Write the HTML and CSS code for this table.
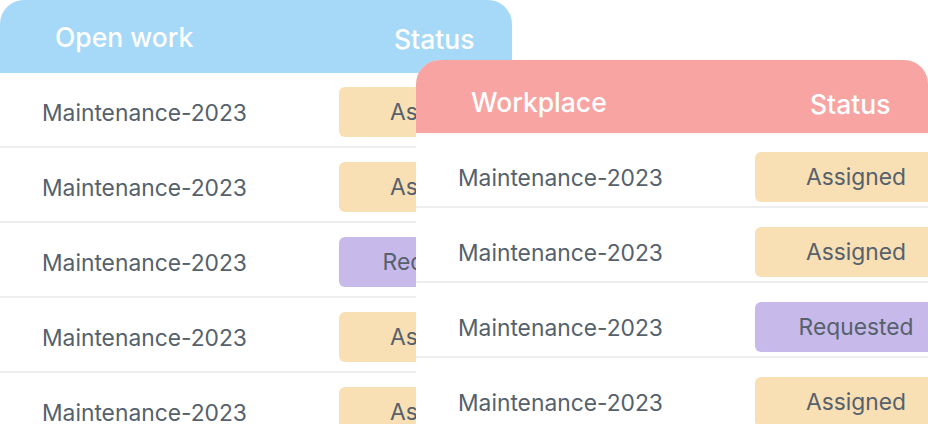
FILE: index.html
```html
<!DOCTYPE html>
<html lang="en">
  <head>
    <meta charset="UTF-8" />
    <meta name="viewport" content="width=device-width, initial-scale=1.0" />
    <title>Work boards</title>
    <link rel="stylesheet" href="styles.css">
  </head>

  <body>
    <div class="stage">
      <section class="board board--open">
        <header class="board-head">
          <span class="board-title">Open work</span>
          <span class="board-status">Status</span>
        </header>
        <div class="row">
          <span class="row-name">Maintenance-2023</span>
          <span class="badge badge--assigned">Assigned</span>
        </div>
        <div class="row">
          <span class="row-name">Maintenance-2023</span>
          <span class="badge badge--assigned">Assigned</span>
        </div>
        <div class="row">
          <span class="row-name">Maintenance-2023</span>
          <span class="badge badge--requested">Requested</span>
        </div>
        <div class="row">
          <span class="row-name">Maintenance-2023</span>
          <span class="badge badge--assigned">Assigned</span>
        </div>
        <div class="row">
          <span class="row-name">Maintenance-2023</span>
          <span class="badge badge--assigned">Assigned</span>
        </div>
      </section>

      <section class="board board--workplace">
        <header class="board-head">
          <span class="board-title">Workplace</span>
          <span class="board-status">Status</span>
        </header>
        <div class="row">
          <span class="row-name">Maintenance-2023</span>
          <span class="badge badge--assigned">Assigned</span>
        </div>
        <div class="row">
          <span class="row-name">Maintenance-2023</span>
          <span class="badge badge--assigned">Assigned</span>
        </div>
        <div class="row">
          <span class="row-name">Maintenance-2023</span>
          <span class="badge badge--requested">Requested</span>
        </div>
        <div class="row">
          <span class="row-name">Maintenance-2023</span>
          <span class="badge badge--assigned">Assigned</span>
        </div>
      </section>
    </div>
  </body>
</html>
```

FILE: styles.css
```css
* {
  margin: 0;
  padding: 0;
  box-sizing: border-box;
}

body {
  font-family: Inter, "Noto Sans", sans-serif;
  background: #fff;
  overflow: hidden;
}

.stage {
  display: grid;
  width: 928px;
  height: 424px;
  overflow: hidden;
}

.board {
  grid-area: 1 / 1;
  width: 512px;
  background: #fff;
  border-radius: 24px 24px 0 0;
  overflow: hidden;
  align-self: start;
}

.board--workplace {
  margin: 60px 0 0 416px;
}

.board-head {
  display: flex;
  align-items: center;
  height: 73px;
  padding-left: 55px;
  font-size: 26.5px;
  font-weight: 500;
  color: #fff;
}

.board--open .board-head {
  background: #a5d9f7;
}

.board--workplace .board-head {
  background: #f8a4a2;
  padding-top: 10px;
}

.board-title {
  width: 339px;
}

.board-status {
  margin-top: 4px;
}

.row {
  display: flex;
  align-items: center;
  height: 75px;
  padding-top: 5px;
  border-bottom: 2px solid #eeeeee;
  font-size: 22.8px;
  color: #55616c;
}

.board--workplace .row {
  padding-top: 15px;
}

.row-name {
  width: 339px;
  padding-left: 42px;
  flex-shrink: 0;
}

.badge {
  flex-shrink: 0;
  width: 202px;
  height: 50px;
  line-height: 50px;
  border-radius: 6px;
  text-align: center;
}

.badge--assigned {
  background: #f9dfb4;
}

.badge--requested {
  background: #c7b9ea;
}
```
